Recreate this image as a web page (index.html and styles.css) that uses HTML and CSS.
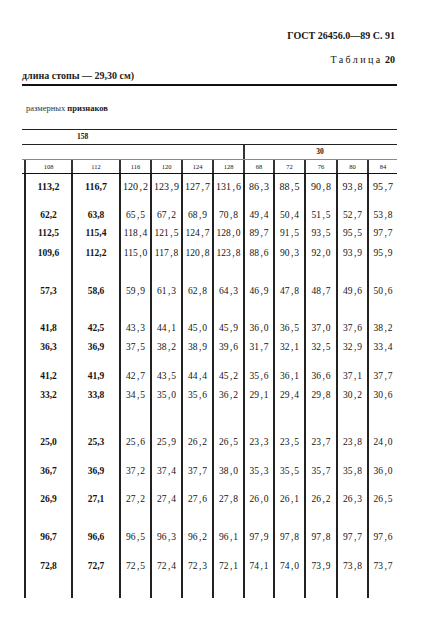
FILE: index.html
```html
<!DOCTYPE html>
<html lang="ru">
<head>
<meta charset="utf-8">
<title>ГОСТ 26456.0—89 С. 91</title>
<link rel="stylesheet" href="styles.css">
</head>
<body>
<div class="page">
  <div class="title">ГОСТ 26456.0—89 С. 91</div>
  <div class="tabno"><span class="sp">Таблица</span> <b>20</b></div>
  <div class="caption">длина стопы — 29,30 см)</div>
  <div class="thick"></div>
  <div class="sub">размерных <b>признаков</b></div>
  <div class="grid">
    <div class="r158"><span class="n158">158</span></div>
    <div class="r30"><div class="gap"></div><div class="n30">30</div></div>
    <div class="row rh"><div>108</div><div>112</div><div>116</div><div>120</div><div>124</div><div>128</div><div>68</div><div>72</div><div>76</div><div>80</div><div>84</div></div>
    <div class="row d r1"><div>113,2</div><div>116,7</div><div>120<i>,</i>2</div><div>123<i>,</i>9</div><div>127<i>,</i>7</div><div>131<i>,</i>6</div><div>86<i>,</i>3</div><div>88<i>,</i>5</div><div>90<i>,</i>8</div><div>93<i>,</i>8</div><div>95<i>,</i>7</div></div>
    <div class="row d h18"><div>62,2</div><div>63,8</div><div>65<i>,</i>5</div><div>67<i>,</i>2</div><div>68<i>,</i>9</div><div>70<i>,</i>8</div><div>49<i>,</i>4</div><div>50<i>,</i>4</div><div>51<i>,</i>5</div><div>52<i>,</i>7</div><div>53<i>,</i>8</div></div>
    <div class="row d h20"><div>112,5</div><div>115,4</div><div>118<i>,</i>4</div><div>121<i>,</i>5</div><div>124<i>,</i>7</div><div>128<i>,</i>0</div><div>89<i>,</i>7</div><div>91<i>,</i>5</div><div>93<i>,</i>5</div><div>95<i>,</i>5</div><div>97<i>,</i>7</div></div>
    <div class="row d h38"><div>109,6</div><div>112,2</div><div>115<i>,</i>0</div><div>117<i>,</i>8</div><div>120<i>,</i>8</div><div>123<i>,</i>8</div><div>88<i>,</i>6</div><div>90<i>,</i>3</div><div>92<i>,</i>0</div><div>93<i>,</i>9</div><div>95<i>,</i>9</div></div>
    <div class="row d h37"><div>57,3</div><div>58,6</div><div>59<i>,</i>9</div><div>61<i>,</i>3</div><div>62<i>,</i>8</div><div>64<i>,</i>3</div><div>46<i>,</i>9</div><div>47<i>,</i>8</div><div>48<i>,</i>7</div><div>49<i>,</i>6</div><div>50<i>,</i>6</div></div>
    <div class="row d h19"><div>41,8</div><div>42,5</div><div>43<i>,</i>3</div><div>44<i>,</i>1</div><div>45<i>,</i>0</div><div>45<i>,</i>9</div><div>36<i>,</i>0</div><div>36<i>,</i>5</div><div>37<i>,</i>0</div><div>37<i>,</i>6</div><div>38<i>,</i>2</div></div>
    <div class="row d h29"><div>36,3</div><div>36,9</div><div>37<i>,</i>5</div><div>38<i>,</i>2</div><div>38<i>,</i>9</div><div>39<i>,</i>6</div><div>31<i>,</i>7</div><div>32<i>,</i>1</div><div>32<i>,</i>5</div><div>32<i>,</i>9</div><div>33<i>,</i>4</div></div>
    <div class="row d h19"><div>41,2</div><div>41,9</div><div>42<i>,</i>7</div><div>43<i>,</i>5</div><div>44<i>,</i>4</div><div>45<i>,</i>2</div><div>35<i>,</i>6</div><div>36<i>,</i>1</div><div>36<i>,</i>6</div><div>37<i>,</i>1</div><div>37<i>,</i>7</div></div>
    <div class="row d h47"><div>33,2</div><div>33,8</div><div>34<i>,</i>5</div><div>35<i>,</i>0</div><div>35<i>,</i>6</div><div>36<i>,</i>2</div><div>29<i>,</i>1</div><div>29<i>,</i>4</div><div>29<i>,</i>8</div><div>30<i>,</i>2</div><div>30<i>,</i>6</div></div>
    <div class="row d h29"><div>25,0</div><div>25,3</div><div>25<i>,</i>6</div><div>25<i>,</i>9</div><div>26<i>,</i>2</div><div>26<i>,</i>5</div><div>23<i>,</i>3</div><div>23<i>,</i>5</div><div>23<i>,</i>7</div><div>23<i>,</i>8</div><div>24<i>,</i>0</div></div>
    <div class="row d h28"><div>36,7</div><div>36,9</div><div>37<i>,</i>2</div><div>37<i>,</i>4</div><div>37<i>,</i>7</div><div>38<i>,</i>0</div><div>35<i>,</i>3</div><div>35<i>,</i>5</div><div>35<i>,</i>7</div><div>35<i>,</i>8</div><div>36<i>,</i>0</div></div>
    <div class="row d h38"><div>26,9</div><div>27,1</div><div>27<i>,</i>2</div><div>27<i>,</i>4</div><div>27<i>,</i>6</div><div>27<i>,</i>8</div><div>26<i>,</i>0</div><div>26<i>,</i>1</div><div>26<i>,</i>2</div><div>26<i>,</i>3</div><div>26<i>,</i>5</div></div>
    <div class="row d h29"><div>96,7</div><div>96,6</div><div>96<i>,</i>5</div><div>96<i>,</i>3</div><div>96<i>,</i>2</div><div>96<i>,</i>1</div><div>97<i>,</i>9</div><div>97<i>,</i>8</div><div>97<i>,</i>8</div><div>97<i>,</i>7</div><div>97<i>,</i>6</div></div>
    <div class="row d h38"><div>72,8</div><div>72,7</div><div>72<i>,</i>5</div><div>72<i>,</i>4</div><div>72<i>,</i>3</div><div>72<i>,</i>1</div><div>74<i>,</i>1</div><div>74<i>,</i>0</div><div>73<i>,</i>9</div><div>73<i>,</i>8</div><div>73<i>,</i>7</div></div>
  </div>
</div>
</body>
</html>
```

FILE: styles.css
```css
* { box-sizing: border-box; }
html, body { margin: 0; padding: 0; background: #fff; }
body { color: #141414; font-family: "Liberation Serif", "DejaVu Serif", serif; }
.page { width: 427px; padding: 29px 30px 0 22px; }
.title { text-align: right; font-weight: bold; font-size: 10px; line-height: 14px; padding-right: 2px; }
.tabno { text-align: right; font-size: 10px; line-height: 14px; margin-top: 10px; padding-right: 2px; }
.tabno .sp { letter-spacing: 2.4px; }
.caption { font-size: 10px; font-weight: bold; line-height: 12px; margin-top: 3px; color: #222; }
.thick { height: 2px; background: #111; margin-top: 2px; }
.sub { font-size: 8.5px; line-height: 10px; margin-top: 17px; padding-left: 4px; color: #333; }
.sub b { color: #222; }

.grid { margin-top: 16px; width: 375px; }
.r158 { height: 15px; border-top: 1px solid #222; font-size: 7.5px; font-weight: bold; line-height: 14px; padding-left: 55px; }
.r30 { height: 15px; border-top: 1px solid #222; display: flex; font-size: 7.5px; font-weight: bold; line-height: 14px; }
.r30 .gap { width: 221px; }
.r30 .n30 { flex: 1; border-left: 2px solid #333; text-align: center; padding-right: 2px; }

.row { display: grid; grid-template-columns: 47px 48px 31px 31px 31px 31px 30px 31px 32px 31px 30px; margin-left: 2px; position: relative; }
.row::before { content: ""; position: absolute; left: -2px; right: 0; top: 0; border-top: 1px solid #444; }
.row > div { border-left: 2px solid #222; text-align: center; white-space: nowrap; }
.rh { height: 14px; font-size: 6.5px; line-height: 13px; padding-top: 1px; }
.rh::before { border-top-color: #8a8a8a; }
.rh > div { border-left-color: #333; }
.d { line-height: 12px; font-size: 9.5px; }
.d > div:nth-child(-n+2) { font-weight: bold; }
.d i { font-style: normal; margin: 0 1px 0 1.5px; }
.r1 { height: 36px; padding-top: 1px; }
.r1::before { border-top-color: #111; }
.r1 > div { padding-top: 7px; font-size: 10px; }
.d:not(.r1)::before { display: none; }
.h18 { height: 18px; } .h19 { height: 19px; } .h20 { height: 20px; } .h28 { height: 28px; } .h29 { height: 29px; }
.h37 { height: 37px; } .h38 { height: 38px; } .h47 { height: 47px; }
```
